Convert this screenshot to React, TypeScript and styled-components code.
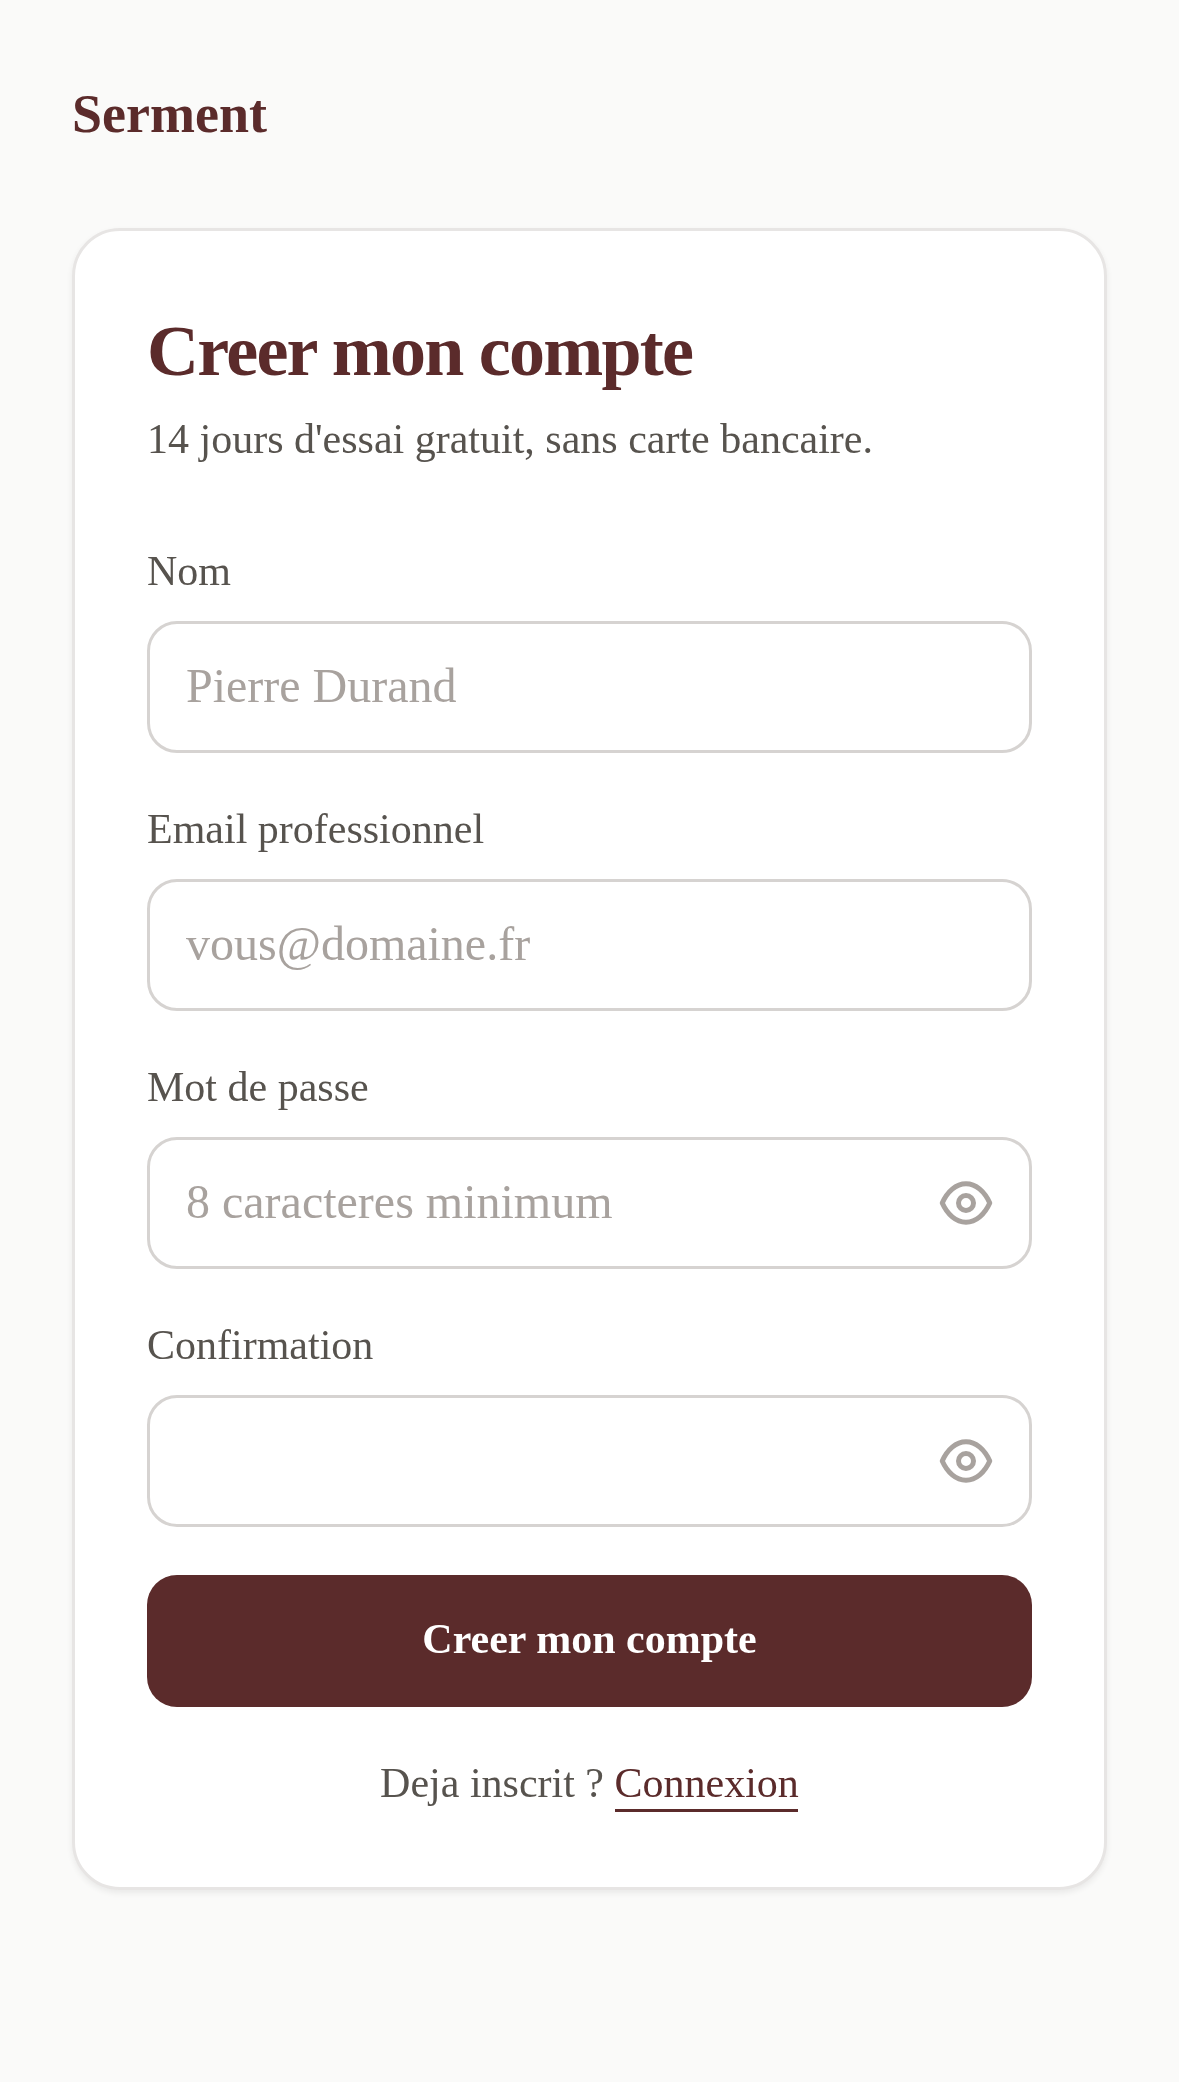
import React from "react";
import styled, { createGlobalStyle } from "styled-components";

const GlobalStyle = createGlobalStyle`
  html, body {
    margin: 0;
    padding: 0;
    background: #fafaf9;
  }
  body {
    min-height: 2082px;
    font-family: "Liberation Serif", "Times New Roman", serif;
  }
`;

// drawn at the 393px phone width, at a device scale of 3
const Page = styled.div`
  box-sizing: border-box;
  width: 393px;
  height: 694px;
  padding: 28px 24px 0;
  transform: scale(3);
  transform-origin: 0 0;
  will-change: transform;
`;

const Brand = styled.div`
  height: 20px;
  line-height: 20px;
  font-size: 18px;
  font-weight: 700;
  color: #5b2b2b;
`;

const Card = styled.main`
  box-sizing: border-box;
  width: 345px;
  margin-top: 28px;
  padding: 25px 24px 24px;
  background: #fff;
  border: 1px solid #e7e5e4;
  border-radius: 16px;
  box-shadow: 0 1px 2px rgba(0, 0, 0, 0.07);
`;

const Title = styled.h1`
  margin: 0;
  font-size: 24px;
  line-height: 31.33px;
  font-weight: 700;
  letter-spacing: -0.58px;
  color: #5b2b2b;
`;

const Subtitle = styled.p`
  margin: 4px 0 0;
  font-size: 14px;
  line-height: 20px;
  color: #57534e;
`;

const Form = styled.form`
  display: flex;
  flex-direction: column;
  gap: 15.33px;
  margin-top: 23px;
`;

const Field = styled.div`
  display: flex;
  flex-direction: column;
  gap: 5.67px;
`;

const Label = styled.label`
  font-size: 14px;
  line-height: 21px;
  color: #57534e;
`;

const InputBox = styled.div`
  box-sizing: border-box;
  display: flex;
  align-items: center;
  height: 44px;
  padding: 0 11px 0 12px;
  border: 1px solid #d6d3d1;
  border-radius: 10px;
  background: #fff;
`;

const Input = styled.input`
  flex: 1;
  min-width: 0;
  padding: 0;
  border: 0;
  outline: 0;
  background: transparent;
  font-family: inherit;
  font-size: 16px;
  color: #57534e;

  &::placeholder {
    color: #a8a29e;
    opacity: 1;
  }
`;

const EyeButton = styled.button`
  display: flex;
  padding: 0;
  border: 0;
  background: none;
  color: #a8a29e;
`;

const Submit = styled.button`
  height: 44px;
  margin-top: 0.67px;
  border: 0;
  border-radius: 10px;
  background: #5b2b2b;
  color: #fff;
  font-family: inherit;
  font-size: 14px;
  font-weight: 700;
`;

const Footer = styled.p`
  margin: 15px 0 0;
  text-align: center;
  font-size: 14px;
  line-height: 21px;
  color: #57534e;
`;

const FooterLink = styled.a`
  padding-bottom: 0.67px;
  color: #5b2b2b;
  text-decoration: none;
  border-bottom: 1px solid #5b2b2b;
`;

function Eye() {
  return (
    <svg width="20" height="20" viewBox="0 0 24 24" fill="none" stroke="currentColor" strokeWidth="2" strokeLinecap="round" strokeLinejoin="round">
      <path d="M2.5 12C4.5 7.5 8 4.3 12 4.3s7.5 3.2 9.5 7.7c-2 4.5-5.5 7.7-9.5 7.7S4.5 16.5 2.5 12z" />
      <circle cx="12" cy="12" r="3" />
    </svg>
  );
}

export default function App() {
  return (
    <Page>
      <GlobalStyle />
      <Brand>Serment</Brand>
      <Card>
        <Title>Creer mon compte</Title>
        <Subtitle>14 jours d'essai gratuit, sans carte bancaire.</Subtitle>
        <Form>
          <Field>
            <Label>Nom</Label>
            <InputBox>
              <Input placeholder="Pierre Durand" />
            </InputBox>
          </Field>
          <Field>
            <Label>Email professionnel</Label>
            <InputBox>
              <Input placeholder="vous@domaine.fr" />
            </InputBox>
          </Field>
          <Field>
            <Label>Mot de passe</Label>
            <InputBox>
              <Input placeholder="8 caracteres minimum" />
              <EyeButton type="button"><Eye /></EyeButton>
            </InputBox>
          </Field>
          <Field>
            <Label>Confirmation</Label>
            <InputBox>
              <Input />
              <EyeButton type="button"><Eye /></EyeButton>
            </InputBox>
          </Field>
          <Submit type="button">Creer mon compte</Submit>
        </Form>
        <Footer>
          Deja inscrit ? <FooterLink href="#">Connexion</FooterLink>
        </Footer>
      </Card>
    </Page>
  );
}
